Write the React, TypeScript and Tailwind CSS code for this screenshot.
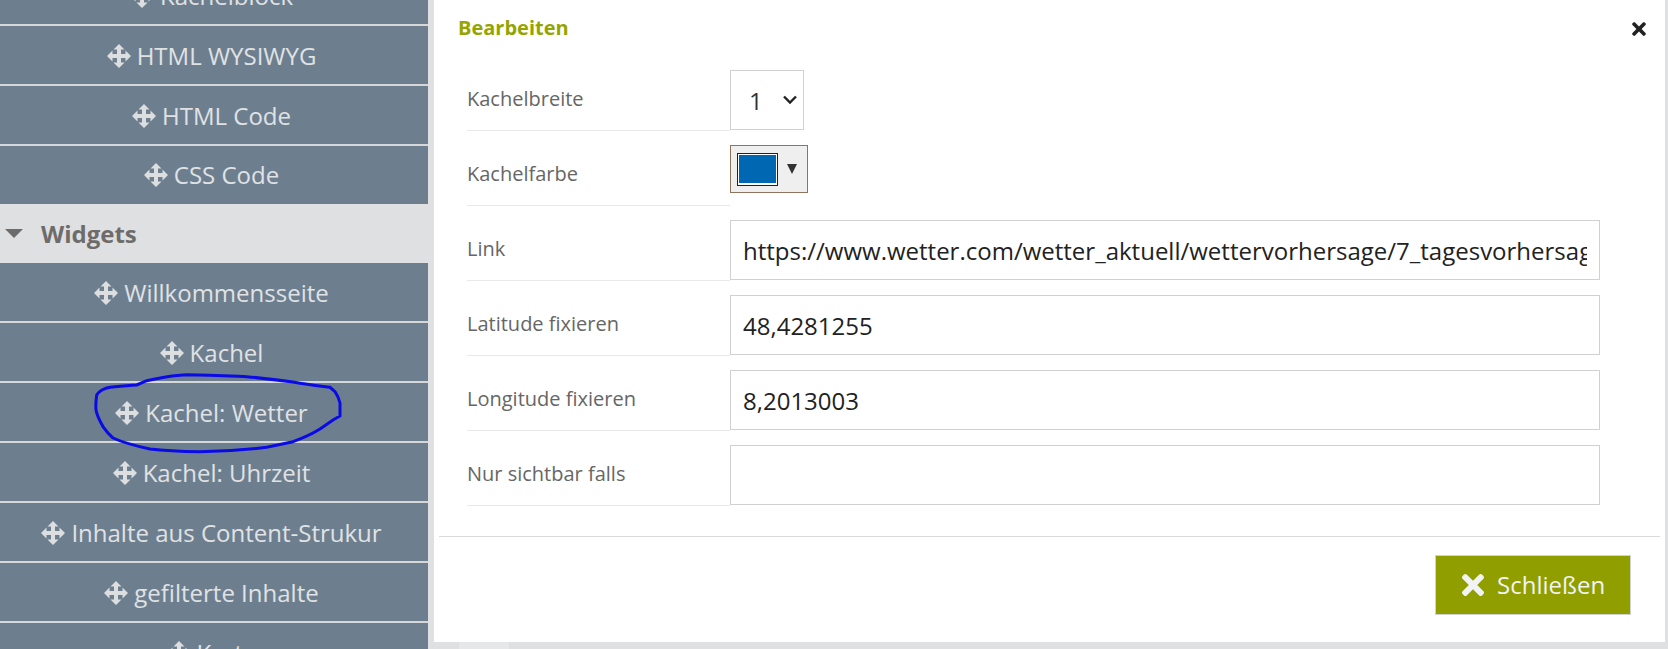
import { FaTimes } from 'react-icons/fa';

const TOP_ROWS = ['Kachelblock', 'HTML WYSIWYG', 'HTML Code', 'CSS Code'];
const WIDGET_ROWS = [
  'Willkommensseite',
  'Kachel',
  'Kachel: Wetter',
  'Kachel: Uhrzeit',
  'Inhalte aus Content-Strukur',
  'gefilterte Inhalte',
  'Karte',
];

function MoveIcon() {
  return (
    <svg viewBox="0 0 24 24" className="w-6 h-6 shrink-0 fill-[#dcdee0]">
      <path d="M12 0l5.5 5.5H14V10h4.5V6.5L24 12l-5.5 5.5V14H14v4.5h3.5L12 24l-5.5-5.5H10V14H5.5v3.5L0 12l5.5-5.5V10H10V5.5H6.5z" />
    </svg>
  );
}

function PaletteRow({ label, last }: { label: string; last?: boolean }) {
  return (
    <div
      className={
        last
          ? 'h-[58px] shrink-0 flex items-center justify-center gap-[6px] pr-[5px] bg-[#6d7f8f] text-[24px] text-[#e0e2e4]'
          : 'h-[60px] shrink-0 flex items-center justify-center gap-[6px] pr-[5px] pt-[1px] bg-[#6d7f8f] border-b-2 border-[#d5d7d9] text-[24px] text-[#e0e2e4]'
      }
    >
      <MoveIcon />
      <span>{label}</span>
    </div>
  );
}

function FieldLabel({ label }: { label: string }) {
  return (
    <div className="w-[263px] shrink-0 h-[61px] pt-[15px] border-b border-[#e8e8e8] text-[20px] leading-[28px] text-[#666666]">
      {label}
    </div>
  );
}

function TextField({ label, value }: { label: string; value: string }) {
  return (
    <div className="flex items-start h-[75px]">
      <FieldLabel label={label} />
      <input
        readOnly
        value={value}
        className="w-[870px] h-[60px] px-[12px] border border-[#cfd1d3] bg-white text-[24px] text-[#222222] outline-none"
      />
    </div>
  );
}

export default function App() {
  return (
    <div className="w-[1668px] h-[649px] overflow-hidden flex bg-[#dfe0e2] font-['Open_Sans',sans-serif]">
      <aside className="relative w-[428px] shrink-0 h-[683px] mt-[-34px] flex flex-col">
        {TOP_ROWS.map((row, i) => (
          <PaletteRow key={row} label={row} last={i === TOP_ROWS.length - 1} />
        ))}
        <div className="h-[59px] shrink-0 flex items-center pl-[5px] gap-[18px] bg-[#dfe0e2] text-[24px] font-bold text-[#6e6c6a]">
          <span className="w-0 h-0 border-x-[9.5px] border-x-transparent border-t-[9px] border-t-[#6e6c6a]" />
          <span>Widgets</span>
        </div>
        {WIDGET_ROWS.map((row) => (
          <PaletteRow key={row} label={row} />
        ))}
        {/* hand drawn marker ring around the weather tile */}
        <svg className="absolute left-0 top-[34px] w-[428px] h-[649px] pointer-events-none" viewBox="0 0 428 649" fill="none">
          <path
            d="M136.7 385L146.7 380.7C160 378 172 375 186.7 374.7C210 375 230 376 246.7 376.7C262 378 278 380 293 382C310 385 320 386 330 387.3L335 391.7C338 396 339 399 340 403L340 416L333 420L320 429C312 434 303 438 293 441.7L266.7 447.3C245 450 222 451.5 200 451.7C182 451.5 166 451 150 449C136 446 124 443 113 438C108 434 106 431 103 426.7C100 421 97 416 96 410C95.5 404 96 400 96.7 395C99 391 102 390 106.7 388C116 386 126 386 136.7 385Z"
            stroke="#0a0ae6"
            strokeWidth="3"
          />
        </svg>
      </aside>

      <div className="ml-[6px] w-[1231px] flex flex-col">
        <main className="h-[642px] shrink-0 bg-white flex flex-col">
          <div className="h-[70px] shrink-0 flex items-start justify-between pl-[24px] pr-[16px] pt-[14px]">
            <h2 className="text-[20px] leading-[28px] font-bold text-[#95a500]">Bearbeiten</h2>
            <FaTimes size={20} className="mt-[5px] text-[#222222]" />
          </div>

          <div className="pl-[33px] flex flex-col">
            <div className="flex items-start h-[75px]">
              <FieldLabel label="Kachelbreite" />
              <div className="w-[74px] h-[60px] border border-[#cfd1d3] flex items-center pl-[18px] gap-[19px] pt-[1px] text-[24px] text-[#333333]">
                <span>1</span>
                <svg viewBox="0 0 16 16" className="w-4 h-4 mb-[4px] fill-none stroke-[#222222] stroke-[2.4]">
                  <path d="M2 5.5l6 6 6-6" />
                </svg>
              </div>
            </div>
            <div className="flex items-start h-[75px]">
              <FieldLabel label="Kachelfarbe" />
              <div className="w-[78px] h-[48px] border border-[#8f735c] bg-[#efefef] flex items-center pl-[6px]">
                <div className="w-[41px] h-[33px] border border-[#222222] bg-white pt-[1px] px-[1px] pb-[2px]">
                  <div className="h-full bg-[#0067b3]" />
                </div>
                <span className="ml-[9px] w-0 h-0 border-x-[5.5px] border-x-transparent border-t-[10px] border-t-[#333333]" />
              </div>
            </div>
            <TextField label="Link" value="https://www.wetter.com/wetter_aktuell/wettervorhersage/7_tagesvorhersage" />
            <TextField label="Latitude fixieren" value="48,4281255" />
            <TextField label="Longitude fixieren" value="8,2013003" />
            <TextField label="Nur sichtbar falls" value="" />
          </div>

          <div className="mx-[5px] mt-[16px] border-t border-[#d9dadb]" />
          <div className="flex justify-end pr-[34px] pt-[18px]">
            <button
              type="button"
              className="w-[196px] h-[60px] flex items-center gap-[8px] pl-[21px] bg-[#919e00] border border-[#cfd1d3] text-[24px] text-[#f2f3f5]"
            >
              <FaTimes size={32} />
              Schließen
            </button>
          </div>
        </main>
        <div className="ml-[25px] w-[50px] h-[7px] bg-[#e6e7e8]" />
      </div>
    </div>
  );
}
